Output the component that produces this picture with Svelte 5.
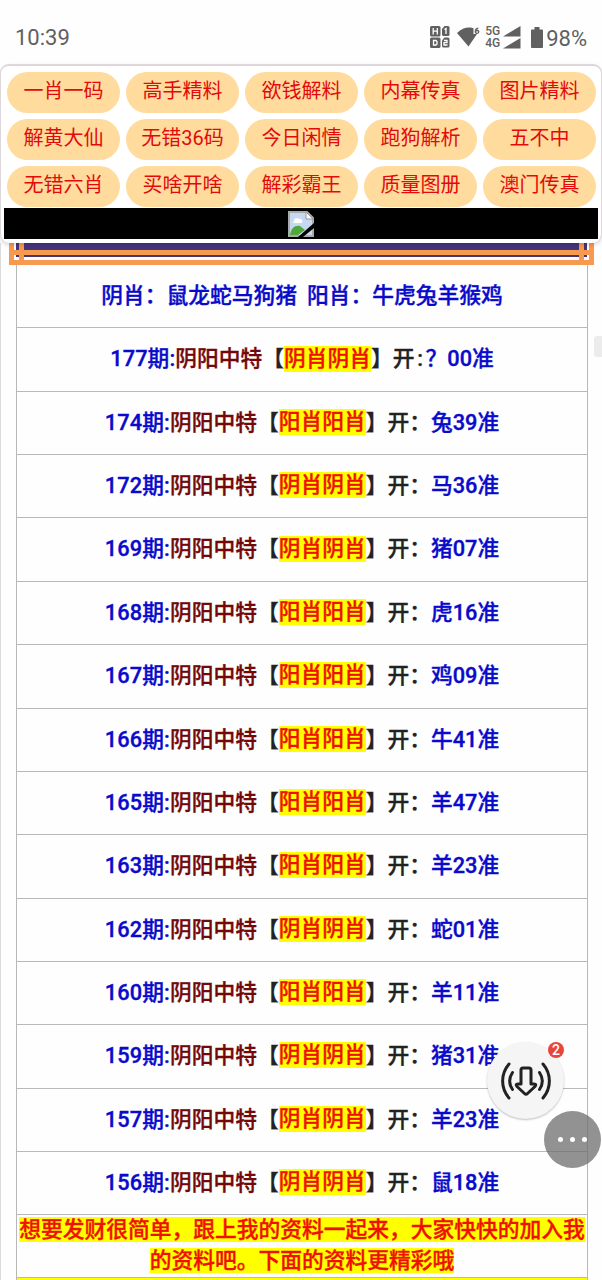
<script lang="ts">
  const links = [
    '一肖一码', '高手精料', '欲钱解料', '内幕传真', '图片精料',
    '解黄大仙', '无错36码', '今日闲情', '跑狗解析', '五不中',
    '无错六肖', '买啥开啥', '解彩霸王', '质量图册', '澳门传真',
  ];

  const rows = [
    { issue: 177, pick: '阴肖', open: '开', result: '？00准' },
    { issue: 174, pick: '阳肖', open: '开：', result: '兔39准' },
    { issue: 172, pick: '阴肖', open: '开：', result: '马36准' },
    { issue: 169, pick: '阴肖', open: '开：', result: '猪07准' },
    { issue: 168, pick: '阳肖', open: '开：', result: '虎16准' },
    { issue: 167, pick: '阳肖', open: '开：', result: '鸡09准' },
    { issue: 166, pick: '阳肖', open: '开：', result: '牛41准' },
    { issue: 165, pick: '阳肖', open: '开：', result: '羊47准' },
    { issue: 163, pick: '阳肖', open: '开：', result: '羊23准' },
    { issue: 162, pick: '阴肖', open: '开：', result: '蛇01准' },
    { issue: 160, pick: '阳肖', open: '开：', result: '羊11准' },
    { issue: 159, pick: '阴肖', open: '开：', result: '猪31准' },
    { issue: 157, pick: '阴肖', open: '开：', result: '羊23准' },
    { issue: 156, pick: '阴肖', open: '开：', result: '鼠18准' },
  ];
</script>

<div class="screen">
  <div class="status">
    <span class="time">10:39</span>
    <div class="status-icons">
      <svg class="hd" width="20" height="22" viewBox="0 0 20 22">
        <rect width="10.500" height="10.500" rx="1.5" />
        <rect y="11.5" width="10.500" height="10.500" rx="1.5" />
        <path d="M14.500 0H18a1.500 1.500 0 0 1 1.500 1.500v7A1.500 1.500 0 0 1 18 10h-4.500A1.500 1.500 0 0 1 12 8.500V3z" />
        <path d="M14.500 11.500H18a1.500 1.500 0 0 1 1.500 1.500v7a1.500 1.500 0 0 1-1.500 1.500h-4.500A1.500 1.500 0 0 1 12 20v-5.500z" />
        <path class="cut" d="M3.200 2v6.500M7.300 2v6.500M3.200 5.200h4M3.500 14.500h2.500l1 1v2.500l-1 1H3.500zM14.500 3.500L16 2.500V8M14 14.500h3v2.200h-3V19h3.500" />
      </svg>
      <svg class="wifi" width="23" height="21" viewBox="0 0 23 21">
        <path d="M0 6C4 2 8 .5 12 .5c2 0 3.500.3 4.500.8V7H20l-8.500 12.500z" />
        <path class="six" d="M21.300 1.200C19 1.500 18.300 3 18.300 4.800c0 2 3.500 2 3.500 0 0-1.700-2.800-1.700-3.300-.2" />
      </svg>
      <div class="nets"><span>5G</span><span>4G</span></div>
      <svg class="bars" width="18" height="23" viewBox="0 0 18 23">
        <path d="M17.500 0v10.500H0zM17.500 12v10.500H0z" />
      </svg>
      <svg class="battery" width="12" height="21" viewBox="0 0 12 21">
        <path d="M3.500 0h5v2.500H11a1 1 0 0 1 1 1V20a1 1 0 0 1-1 1H1a1 1 0 0 1-1-1V3.500a1 1 0 0 1 1-1h2.500z" />
      </svg>
      <span class="charge">98%</span>
    </div>
  </div>

  <header class="top">
    <nav class="links">
      {#each links as link}
        <span class="link">{link}</span>
      {/each}
    </nav>
    <div class="banner">
      <svg width="26" height="26" viewBox="0 0 26 26">
        <path d="M1 1h18l6 6v18H1z" fill="#c6d9f2" stroke="#aaa" stroke-width="2" />
        <path d="M6 10c0-3 3-4 5-2 3-1 4 2 3 4H5z" fill="#fff" />
        <path d="M2 24c1-7 5-10 10-9l5 4-7 5z" fill="#50a83c" />
        <path d="M18 1v7h7z" fill="#fff" stroke="#999" />
        <path d="M26 12L10 26h5l11-9z" fill="#000" />
      </svg>
    </div>
  </header>

  <div class="page">
    <svg class="frame" width="585" height="22" viewBox="0 0 585 22">
      <rect x="7" y="0" width="571" height="14" fill="#46347a" />
      <path d="M0 0h5v17h575V0h5v22H0z" fill="#f79a50" />
      <path d="M10 0h5v7h555V0h5v7h5v5h-5v5h-5v-5H15v5h-5v-5H5V7h5z" fill="#f79a50" />
    </svg>

    <main class="board">
      <div class="row signs"><span>阴肖：鼠龙蛇马狗猪</span><span>阳肖：牛虎兔羊猴鸡</span></div>
      {#each rows as row}
        <div class="row">
          <span class="issue">{row.issue}期:</span><span class="name">阴阳中特</span><span>【</span><mark>{row.pick}{row.pick}</mark><span>】{row.open}</span>{#if row.open === '开'}<span class="colon">:</span>{/if}<span class="result">{row.result}</span>
        </div>
      {/each}
      <div class="slogan">
        <mark>想要发财很简单，跟上我的资料一起来，大家快快的加入我的资料吧。下面的资料更精彩哦</mark>
      </div>
      <div class="next"></div>
    </main>
  </div>

  <div class="scrollbar"></div>
  <div class="fab">
    <svg width="50" height="38" viewBox="0 0 50 38">
      <path d="M8 2C-.5 12-.5 26 8 36M42 2c8.500 10 8.500 24 0 34M11.500 10.500c-4 6-4 11 0 17M38.500 10.500c4 6 4 11 0 17" />
      <path d="M20 8q0-2 2-2h6q2 0 2 2v14h3q3 0 1 2.500L26.500 31.500q-1.500 1.500-3 0L16 24.500Q14 22 17 22h3z" />
    </svg>
    <span class="badge">2</span>
  </div>
  <div class="more"><i></i><i></i><i></i></div>
</div>

<style>
  :global(body) {
    margin: 0;
    background: #fff;
  }

  .screen {
    position: relative;
    box-sizing: border-box;
    width: 602px;
    height: 1280px;
    overflow: hidden;
    background: #fefefe;
    font-family: Roboto, "Noto Sans CJK SC", sans-serif;
  }

  .status {
    display: flex;
    justify-content: space-between;
    box-sizing: border-box;
    height: 64px;
    padding: 12px 15px 0;
    color: #606060;
    font-size: 22px;
  }

  .time,
  .charge {
    line-height: 52px;
  }

  .status-icons {
    display: flex;
    align-items: center;
    height: 50px;
    fill: #606060;
  }

  .charge {
    margin: 3px 0 0 3px;
  }

  .cut,
  .six {
    fill: none;
    stroke: #fff;
    stroke-width: 1.300;
  }

  .six {
    stroke: #606060;
  }

  .wifi {
    margin-left: 7px;
  }

  .nets {
    display: flex;
    flex-direction: column;
    margin-left: 5px;
    width: 17px;
    font-size: 12px;
    font-weight: 500;
    line-height: 12px;
  }

  .bars {
    margin-left: 1px;
  }

  .battery {
    margin-left: 10px;
  }

  .top {
    position: relative;
    box-sizing: border-box;
    height: 179px;
    padding: 6px 3px 0;
    border: 1px solid #ddd6da;
    border-top-width: 2px;
    border-bottom: 0;
    border-radius: 9px;
    background: #fff;
    box-shadow: 0 2px 4px rgba(0, 0, 0, 0.15);
  }

  .links {
    display: grid;
    grid-template-columns: repeat(5, 113px);
    gap: 6px;
    padding-left: 3px;
  }

  .link {
    height: 41px;
    border-radius: 21px;
    background: #ffdb9d;
    color: #e20a0a;
    font-size: 20px;
    line-height: 39px;
    text-align: center;
  }

  .banner {
    display: flex;
    justify-content: center;
    align-items: center;
    height: 30px;
    margin-top: 1px;
    padding-top: 1px;
    background: #000;
  }

  .page {
    box-sizing: border-box;
    height: 1037px;
    border-left: 1px solid #dcdcdc;
  }

  .frame {
    display: block;
    margin-left: 8px;
  }

  .board {
    width: 570px;
    margin-left: 15px;
    border: solid #b8b8b8;
    border-width: 0 1px;
    color: #222;
    font-size: 21.750px;
    font-weight: 500;
    -webkit-text-stroke: 0.350px;
  }

  .row {
    display: flex;
    justify-content: center;
    box-sizing: border-box;
    height: 63.360px;
    border-bottom: 1px solid #b8b8b8;
    line-height: 61px;
    white-space: pre;
  }

  .signs {
    gap: 10px;
    color: #0a0acb;
  }

  .issue,
  .result {
    color: #0a0acb;
  }

  .issue {
    letter-spacing: 0.100px;
  }

  .colon {
    width: 11px;
    text-align: center;
  }

  .name {
    color: #740808;
  }

  mark {
    background: #ff0;
    color: #f01000;
  }

  .row mark {
    align-self: center;
    margin-bottom: 2px;
    line-height: 26px;
  }

  .slogan {
    box-sizing: border-box;
    height: 63px;
    border-bottom: 1px solid #b8b8b8;
    line-height: 30.500px;
    text-align: center;
  }

  .next {
    height: 10px;
    background: #ff0;
  }

  .scrollbar {
    position: absolute;
    top: 336px;
    right: 0;
    width: 8px;
    height: 21px;
    border-radius: 3px 0 0 3px;
    background: #ececec;
  }

  .fab {
    position: absolute;
    top: 1042px;
    left: 487px;
    display: flex;
    align-items: center;
    justify-content: center;
    width: 77px;
    height: 77px;
    border-radius: 50%;
    background: #f5f5f5;
    box-shadow: 0 1px 2px rgba(0, 0, 0, 0.25);
  }

  .fab svg {
    fill: none;
    stroke: #222;
    stroke-width: 3;
    stroke-linecap: round;
    stroke-linejoin: round;
  }

  .badge {
    position: absolute;
    top: 0;
    right: 0;
    width: 16px;
    height: 16px;
    border-radius: 50%;
    background: #e8453c;
    color: #fff;
    font-size: 14px;
    font-weight: 500;
    line-height: 17px;
    text-align: center;
  }

  .more {
    position: absolute;
    top: 1111px;
    left: 544px;
    display: flex;
    align-items: center;
    justify-content: center;
    gap: 7px;
    width: 57px;
    height: 57px;
    border-radius: 50%;
    background: rgba(110, 110, 110, 0.75);
  }

  .more i {
    width: 5px;
    height: 5px;
    border-radius: 50%;
    background: #fff;
  }
</style>
